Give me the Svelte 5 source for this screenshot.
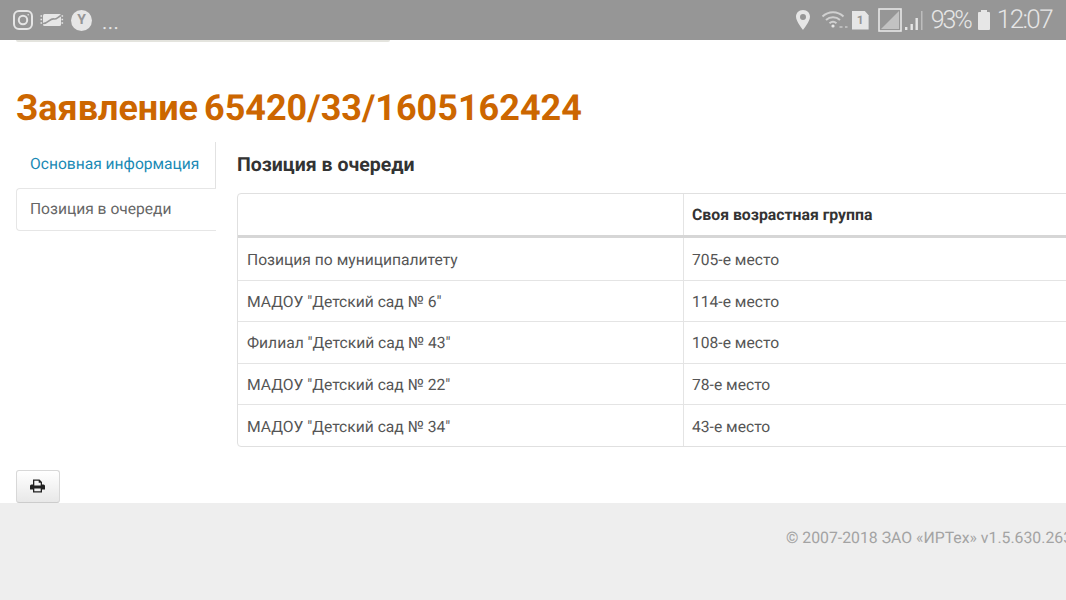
<script>
	const rows = [
		['Позиция по муниципалитету', '705-е место'],
		['МАДОУ "Детский сад № 6"', '114-е место'],
		['Филиал "Детский сад № 43"', '108-е место'],
		['МАДОУ "Детский сад № 22"', '78-е место'],
		['МАДОУ "Детский сад № 34"', '43-е место']
	];
</script>

<div class="page">
	<header class="status">
		<div class="status-left">
			<svg class="ig" width="22" height="22" viewBox="0 0 22 22" fill="none" stroke="#e6e6e6" stroke-width="2">
				<rect x="2" y="2" width="18" height="18" rx="5" />
				<circle cx="11" cy="11" r="4.2" />
				<circle cx="16.2" cy="5.8" r="0.8" fill="#e6e6e6" stroke="none" />
			</svg>
			<svg class="feet" width="24" height="16" viewBox="0 0 24 16" fill="#e6e6e6">
				<rect x="3" y="2" width="18" height="12" rx="1.5" />
				<path d="M0.5 4 h2 M0.5 7.5 h2 M0.5 11 h2 M21.5 4 h2 M21.5 7.5 h2 M21.5 11 h2" stroke="#e6e6e6" stroke-width="1.6" stroke-dasharray="1.6 0.6" />
				<path d="M3 11.5 C8 12 10 6 14 7 C16.5 7.5 18 5 21 3.5" fill="none" stroke="#969696" stroke-width="1.6" />
			</svg>
			<span class="yc">Y</span>
			<span class="dots">...</span>
		</div>
		<div class="status-right">
			<svg width="16" height="22" viewBox="0 0 16 22">
				<path fill-rule="evenodd" fill="#e6e6e6" d="M8 1 C3.6 1 1 4.2 1 7.8 C1 12.5 8 21 8 21 C8 21 15 12.5 15 7.8 C15 4.2 12.4 1 8 1 Z M8 5 A3 3 0 1 1 8 11 A3 3 0 0 1 8 5 Z" />
			</svg>
			<svg class="wifi" width="27" height="20" viewBox="0 0 27 20" fill="none" stroke="#d0d0d0" stroke-width="2">
				<path d="M1.5 6.5 C7.5 0.8 16.5 0.8 22.5 6.5" />
				<path d="M5 10 C9 6.4 15 6.4 19 10" />
				<path d="M8.5 13.2 C10.6 11.4 13.4 11.4 15.5 13.2" />
				<circle cx="12" cy="16" r="1.6" fill="#e6e6e6" stroke="none" />
				<path d="M18.5 17 h3 M24 17 h2.5" stroke-width="2" stroke="#bcbcbc" />
			</svg>
			<span class="sim">1</span>
			<svg class="nosig" width="24" height="24" viewBox="0 0 24 24">
				<rect x="1" y="1" width="22" height="22" fill="none" stroke="#e6e6e6" stroke-width="1.6" />
				<path d="M3 21 L21 3 V21 Z" fill="#c2c2c2" />
			</svg>
			<svg class="bars" width="21" height="22" viewBox="0 0 21 22" fill="#e6e6e6">
				<rect x="2" y="18" width="2.4" height="3" />
				<rect x="7.5" y="15" width="2.4" height="6" />
				<rect x="12.5" y="9" width="2.4" height="12" />
				<rect x="18" y="2" width="1.5" height="19" fill="#bdbdbd" />
			</svg>
			<span class="pct">93%</span>
			<svg class="batt" width="14" height="22" viewBox="0 0 14 22" fill="#e6e6e6">
				<path d="M4 1 h6 v2 h2 a1 1 0 0 1 1 1 V20 a1 1 0 0 1 -1 1 H2 a1 1 0 0 1 -1 -1 V4 a1 1 0 0 1 1 -1 h2 Z" />
			</svg>
			<span class="time">12:07</span>
		</div>
	</header>

	<main class="content">
		<div class="scrolled-edge"></div>
		<h1>Заявление 65420/33/1605162424</h1>

		<div class="columns">
			<nav class="tabs">
				<a href="#info" class="tab">Основная информация</a>
				<a href="#queue" class="tab active">Позиция в очереди</a>
			</nav>

			<section class="panel">
				<h2>Позиция в очереди</h2>
				<div class="table">
					<div class="row head">
						<div class="cell name"></div>
						<div class="cell">Своя возрастная группа</div>
					</div>
					{#each rows as row}
						<div class="row">
							<div class="cell name">{row[0]}</div>
							<div class="cell">{row[1]}</div>
						</div>
					{/each}
				</div>
			</section>
		</div>

		<button class="print" aria-label="Печать">
			<svg width="15" height="14" viewBox="0 0 15 14">
				<path fill="#222" fill-rule="evenodd" d="M3 0.5 H9.5 L12 3 V5.5 H13.5 A1.5 1.5 0 0 1 15 7 V10.5 H12 V13.5 H3 V10.5 H0 V7 A1.5 1.5 0 0 1 1.5 5.5 H3 Z M4.3 1.8 V6.5 H10.7 V3.8 H8.7 V1.8 Z M4.3 9.5 V12.2 H10.7 V9.5 Z" />
			</svg>
		</button>
	</main>

	<footer class="foot">
		<span>© 2007-2018 ЗАО «ИРТех» v1.5.630.263</span>
	</footer>
</div>

<style>
	:global(body) {
		margin: 0;
		overflow: hidden;
		background: #fff;
	}

	.page {
		width: 1066px;
		height: 600px;
		overflow: hidden;
		display: flex;
		flex-direction: column;
		font-family: Roboto, "Liberation Sans", sans-serif;
		color: #333;
		text-rendering: geometricPrecision;
	}

	.status {
		height: 40px;
		flex: none;
		background: #969696;
		display: flex;
		justify-content: space-between;
		align-items: center;
		padding: 0 14px 0 12px;
		color: #e6e6e6;
	}

	.status-left,
	.status-right {
		display: flex;
		align-items: center;
	}

	.feet {
		margin-left: 6px;
	}

	.yc {
		width: 21px;
		height: 21px;
		margin-left: 7px;
		border-radius: 50%;
		background: #e6e6e6;
		color: #969696;
		font-size: 14px;
		font-weight: 700;
		display: flex;
		align-items: center;
		justify-content: center;
	}

	.dots {
		margin-left: 10px;
		font-size: 20px;
		line-height: 20px;
		padding-top: 3px;
		letter-spacing: 0.5px;
	}

	.wifi {
		margin-left: 10px;
	}

	.sim {
		width: 17px;
		height: 19px;
		margin-left: 4px;
		background: #e6e6e6;
		color: #969696;
		font-size: 12px;
		font-weight: 700;
		display: flex;
		align-items: center;
		justify-content: center;
		clip-path: polygon(0 0, 75% 0, 100% 25%, 100% 100%, 0 100%);
	}

	.nosig {
		margin-left: 9px;
	}

	.bars {
		margin-left: 1px;
	}

	.pct {
		margin-left: 7px;
		font-size: 25px;
		font-weight: 300;
		letter-spacing: -2px;
	}

	.batt {
		margin-left: 6px;
	}

	.time {
		margin-left: 6px;
		font-size: 26px;
		font-weight: 300;
		letter-spacing: -1.6px;
	}

	.content {
		flex: none;
		height: 463px;
		padding: 0 0 0 16px;
		box-sizing: border-box;
		display: flex;
		flex-direction: column;
		align-items: flex-start;
	}

	.scrolled-edge {
		width: 374px;
		height: 2px;
		flex: none;
		background: #e4e4de;
		border-radius: 0 0 3px 3px;
	}

	h1 {
		margin: 47px 0 0;
		font-size: 36px;
		line-height: 38px;
		font-weight: 700;
		word-spacing: -3px;
		color: #cc6600;
		white-space: nowrap;
	}

	.columns {
		display: flex;
		margin-top: 15px;
		width: 1100px;
		flex: none;
	}

	.tabs {
		width: 200px;
		flex: none;
		display: flex;
		flex-direction: column;
		font-size: 15.6px;
	}

	.tab {
		height: 46px;
		box-sizing: border-box;
		padding: 0 0 2px 14px;
		display: flex;
		align-items: center;
		text-decoration: none;
		color: #1a8ab5;
		border-right: 1px solid #e2e2e2;
	}

	.tab.active {
		height: 43px;
		color: #666;
		border: 1px solid #e6e6e6;
		border-right: none;
		border-radius: 4px 0 0 4px;
		padding-left: 13px;
	}

	.panel {
		margin-left: 21px;
		flex: 1;
		min-width: 0;
	}

	h2 {
		margin: 11px 0 0;
		font-size: 19.5px;
		line-height: 24px;
		font-weight: 700;
		color: #333;
	}

	.table {
		margin: 16px 0 0;
		border: 1px solid #e0e0e0;
		border-radius: 4px;
		font-size: 15.65px;
		color: #555;
	}

	.row {
		display: flex;
		height: 41.6px;
		border-top: 1px solid #e4e4e4;
		box-sizing: border-box;
	}

	.row:first-child {
		border-top: none;
	}

	.row.head {
		height: 44px;
		border-bottom: 3px solid #d6d6d6;
		font-size: 15.8px;
		font-weight: 700;
		color: #333;
	}

	.row.head + .row {
		border-top: none;
	}

	.cell {
		padding: 1px 8px 0;
		display: flex;
		align-items: center;
	}

	.head .cell {
		padding-top: 0;
	}

	.cell.name {
		width: 446px;
		box-sizing: border-box;
		border-right: 1px solid #e4e4e4;
		padding-left: 9px;
	}

	.print {
		margin-top: 23px;
		width: 44px;
		height: 33px;
		padding: 0 2px 0 0;
		flex: none;
		border: 1px solid #d8d8d8;
		border-bottom-color: #ccc;
		border-radius: 3px;
		background: linear-gradient(#fff, #e8e8e8);
		display: flex;
		align-items: center;
		justify-content: center;
	}

	.foot {
		flex: 1;
		background: #eeeeee;
		padding: 26px 0 0 786px;
		box-sizing: border-box;
		font-size: 15.8px;
		line-height: 17px;
		color: #a3a3a3;
		white-space: nowrap;
	}
</style>
